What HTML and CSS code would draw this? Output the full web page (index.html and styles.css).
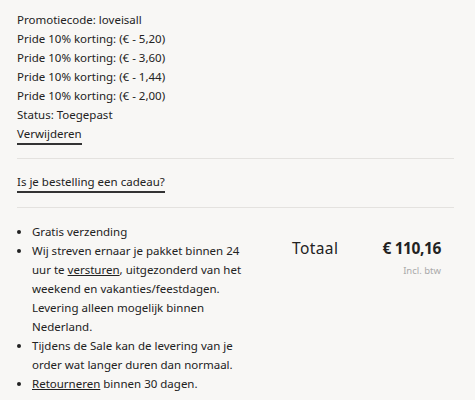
FILE: index.html
```html
<!DOCTYPE html>
<html lang="nl">
<head>
    <meta charset="UTF-8">
    <meta name="viewport" content="width=device-width, initial-scale=1.0">
    <title>Winkelwagen</title>
    <link rel="stylesheet" href="styles.css">
</head>
<body>
    <div class="cart-summary">
        <div class="promo">
            <div>Promotiecode: loveisall</div>
            <div>Pride 10% korting: (€ - 5,20)</div>
            <div>Pride 10% korting: (€ - 3,60)</div>
            <div>Pride 10% korting: (€ - 1,44)</div>
            <div>Pride 10% korting: (€ - 2,00)</div>
            <div>Status: Toegepast</div>
            <a href="#" class="link-strong">Verwijderen</a>
        </div>

        <div class="gift">
            <a href="#" class="link-strong">Is je bestelling een cadeau?</a>
        </div>

        <div class="bottom">
            <ul class="usps">
                <li>Gratis verzending</li>
                <li>Wij streven ernaar je pakket binnen 24 uur te <a href="#">versturen</a>, uitgezonderd van het weekend en vakanties/feestdagen. Levering alleen mogelijk binnen Nederland.</li>
                <li>Tijdens de Sale kan de levering van je order wat langer duren dan normaal.</li>
                <li><a href="#">Retourneren</a> binnen 30 dagen.</li>
            </ul>
            <div class="total">
                <div class="total-row">
                    <span class="total-label">Totaal</span>
                    <span class="total-amount">€ 110,16</span>
                </div>
                <div class="vat">Incl. btw</div>
            </div>
        </div>
    </div>
</body>
</html>
```
FILE: styles.css
```css
body {
    margin: 0;
    background: #f8f7f5;
    font-family: "Noto Sans", Arial, sans-serif;
    font-size: 11.5px;
    line-height: 19px;
    color: #222;
}
a {
    color: #222;
}
.cart-summary {
    width: 437px;
    padding: 10px 0 0 17px;
}
.link-strong {
    display: inline-block;
    text-decoration: none;
    border-bottom: 2px solid #333;
}
.promo {
    padding-bottom: 13px;
    border-bottom: 1px solid #e4e2df;
}
.gift {
    padding: 13px 0 14px;
    border-bottom: 1px solid #e4e2df;
}
.bottom {
    display: flex;
    align-items: flex-start;
    padding-top: 14px;
}
.usps {
    width: 214px;
    margin: 0;
    padding-left: 15px;
}
.usps a {
    text-decoration: underline;
}
.total {
    width: 149px;
    margin: 16px 13px 0 auto;
}
.total-row {
    display: flex;
    justify-content: space-between;
    font-size: 15.5px;
    line-height: 20px;
}
.total-label {
    letter-spacing: 0.4px;
}
.total-amount {
    font-weight: 700;
    letter-spacing: -0.4px;
}
.vat {
    text-align: right;
    font-size: 9.5px;
    color: #aaa;
    margin-top: 3px;
}
```
